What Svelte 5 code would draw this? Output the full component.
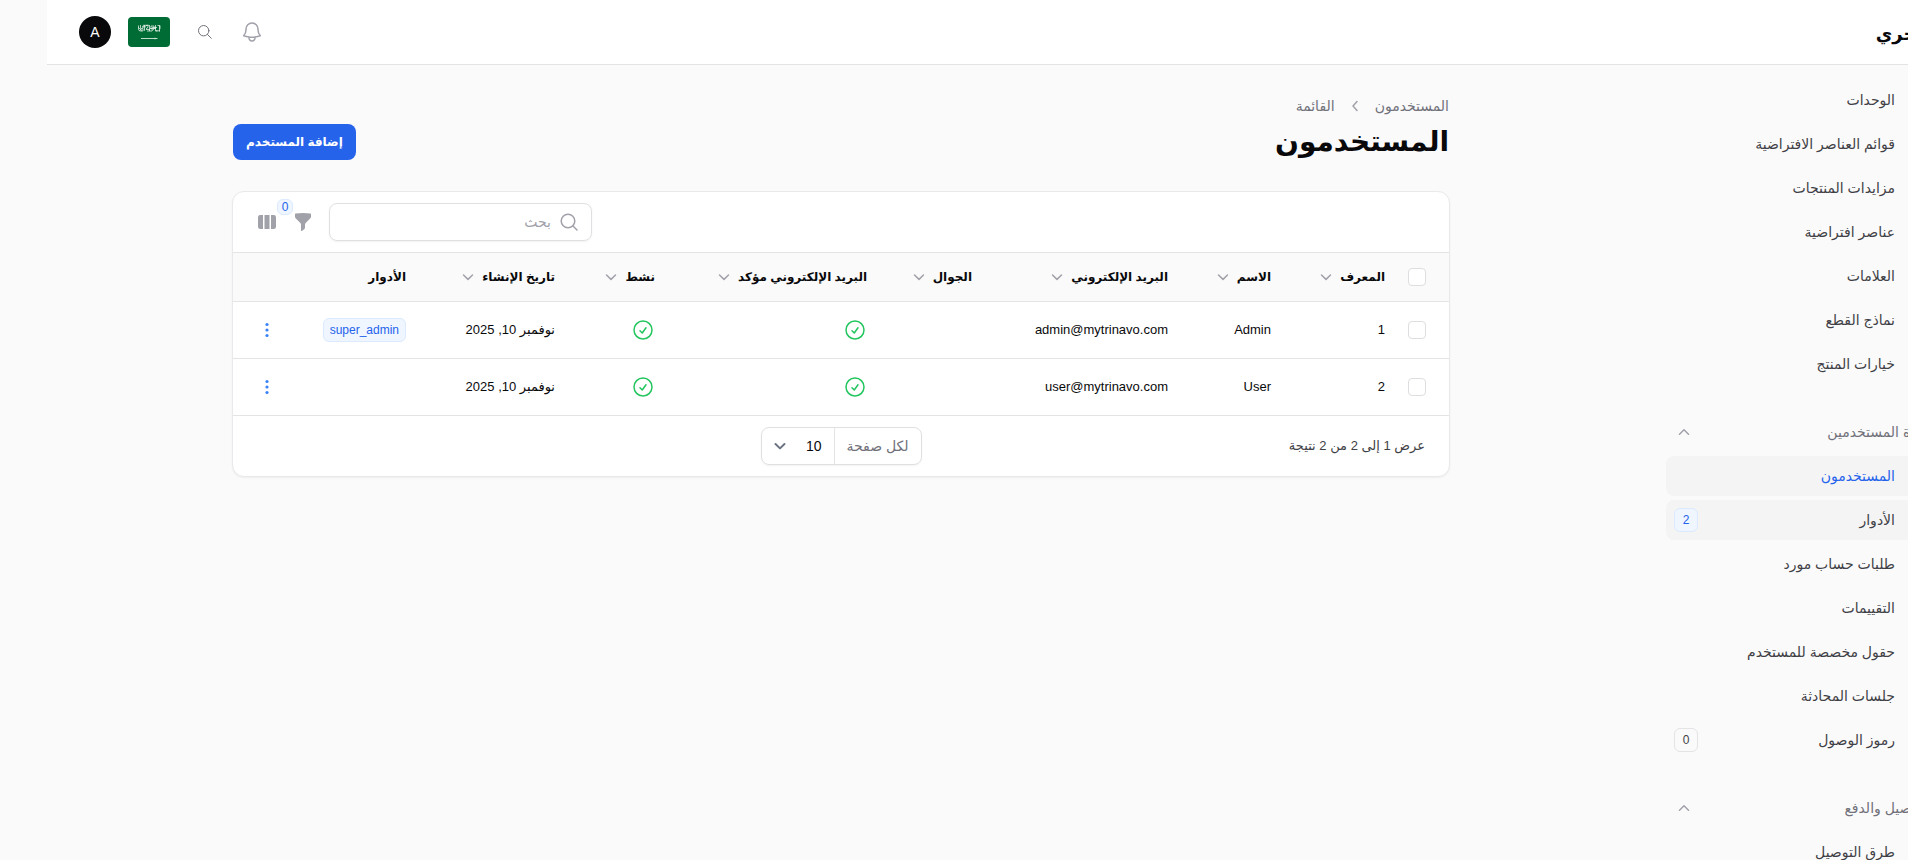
<script>
	let search = $state('');
	let perPage = $state('10');

	const navGroups = [
		{
			title: '',
			links: [
				{ text: 'الوحدات', href: '#units' },
				{ text: 'قوائم العناصر الافتراضية', href: '#default-lists' },
				{ text: 'مزايدات المنتجات', href: '#bids' },
				{ text: 'عناصر افتراضية', href: '#virtual-items' },
				{ text: 'العلامات', href: '#tags' },
				{ text: 'نماذج القطع', href: '#models' },
				{ text: 'خيارات المنتج', href: '#options' }
			]
		},
		{
			title: 'إدارة المستخدمين',
			links: [
				{ text: 'المستخدمون', href: '#users', active: true },
				{ text: 'الأدوار', href: '#roles', badge: 2, highlighted: true },
				{ text: 'طلبات حساب مورد', href: '#vendor-requests' },
				{ text: 'التقييمات', href: '#reviews' },
				{ text: 'حقول مخصصة للمستخدم', href: '#custom-fields' },
				{ text: 'جلسات المحادثة', href: '#chats' },
				{ text: 'رموز الوصول', href: '#tokens', badge: 0 }
			]
		},
		{
			title: 'التوصيل والدفع',
			links: [{ text: 'طرق التوصيل', href: '#delivery' }]
		}
	];

	const columns = [
		{ key: 'id', label: 'المعرف', sortable: true },
		{ key: 'name', label: 'الاسم', sortable: true },
		{ key: 'email', label: 'البريد الإلكتروني', sortable: true },
		{ key: 'mobile', label: 'الجوال', sortable: true },
		{ key: 'verified', label: 'البريد الإلكتروني مؤكد', sortable: true },
		{ key: 'enabled', label: 'نشط', sortable: true },
		{ key: 'created', label: 'تاريخ الإنشاء', sortable: true },
		{ key: 'roles', label: 'الأدوار', sortable: false }
	];

	const users = [
		{ id: 1, name: 'Admin', email: 'admin@mytrinavo.com', created: 'نوفمبر 10, 2025', role: 'super_admin' },
		{ id: 2, name: 'User', email: 'user@mytrinavo.com', created: 'نوفمبر 10, 2025', role: '' }
	];
</script>

{#snippet chevron(direction)}
	<svg class="chevron" viewBox="0 0 20 20" aria-hidden="true">
		<path d={direction === 'up' ? 'M5.5 12.2 10 7.8l4.5 4.4' : 'M5.5 8 10 12.4 14.5 8'} />
	</svg>
{/snippet}

{#snippet check()}
	<svg class="check" viewBox="0 0 24 24" aria-label="نعم">
		<path d="M9 12.75 11.25 15 15 9.75M21 12a9 9 0 1 1-18 0 9 9 0 0 1 18 0Z" />
	</svg>
{/snippet}

<div class="viewport">
	<div class="page" dir="rtl" lang="ar">
		<header class="topbar">
			<a class="logo" href="#home">متجري</a>
			<div class="topbar-end">
				<button class="icon-button bell" aria-label="الإشعارات">
					<svg viewBox="0 0 24 24">
						<path
							d="M14.857 17.082a23.848 23.848 0 0 0 5.454-1.31A8.967 8.967 0 0 1 18 9.75V9A6 6 0 0 0 6 9v.75a8.967 8.967 0 0 1-2.312 6.022c1.733.64 3.56 1.085 5.455 1.31m5.714 0a24.255 24.255 0 0 1-5.714 0m5.714 0a3 3 0 1 1-5.714 0"
						/>
					</svg>
				</button>
				<button class="icon-button find" aria-label="بحث">
					<svg viewBox="0 0 16 16">
						<circle cx="6.7" cy="6.7" r="5.2" />
						<path d="m10.5 10.5 3.8 3.8" />
					</svg>
				</button>
				<button class="flag" aria-label="العربية">
					<svg viewBox="0 0 42 30">
						<g fill="none" stroke="#fff" stroke-width="0.8" opacity="0.85">
							<path
								d="M10.5 8.500v3.500q0 2 2 2h2.500M12.500 8v3.500h2.500V8.800M16.500 8v5.500M18 8.500q2-1 2 1t-2 2.200M21.500 8v6M23 9h3v3h-3zM27.500 8v5q0 1.500 2 1M29.500 8.500h2.500v3.500M31.500 9v5.500M12 13h5M19 14h5l1.500-2M27 13.800h5M14 9.800h4M22 11.500h6M10.500 10.500l3 3M18 12.500h4M24 10.500h5M15 8.300h6"
							/>
						</g>
						<path d="M13 21.500h16.500M27 20.800v1.500" fill="none" stroke="#d5e8dc" stroke-width="0.9" />
					</svg>
				</button>
				<button class="avatar">A</button>
			</div>
		</header>

		<div class="layout">
			<aside class="sidebar">
				{#each navGroups as group}
					<nav class="nav-group">
						{#if group.title}
							<button class="group-title">
								<span>{group.title}</span>
								{@render chevron('up')}
							</button>
						{/if}
						{#each group.links as link}
							<a
								href={link.href}
								class="nav-link"
								class:active={link.active}
								class:highlighted={link.highlighted}
							>
								<span>{link.text}</span>
								{#if link.badge !== undefined}
									<span class="nav-badge">{link.badge}</span>
								{/if}
							</a>
						{/each}
					</nav>
				{/each}
			</aside>

			<main class="content">
				<nav class="breadcrumbs">
					<a href="#users">المستخدمون</a>
					<svg viewBox="0 0 20 20" aria-hidden="true"><path d="M12 5.500 8 10l4 4.500" /></svg>
					<span>القائمة</span>
				</nav>
				<div class="heading">
					<h1>المستخدمون</h1>
					<button class="primary">إضافة المستخدم</button>
				</div>

				<section class="card">
					<div class="toolbar">
						<label class="search">
							<svg viewBox="0 0 20 20" aria-hidden="true">
								<circle cx="9" cy="9" r="6.800" />
								<path d="m14 14 4 4" />
							</svg>
							<input type="search" placeholder="بحث" aria-label="بحث" bind:value={search} />
						</label>
						<button class="tool" aria-label="تصفية">
							<svg viewBox="0 0 20 20">
								<path
									d="M2.628 1.601C5.028 1.206 7.490 1 10 1s4.973.206 7.372.601a.75.75 0 0 1 .628.740v2.288a2.250 2.250 0 0 1-.659 1.590l-4.682 4.683a2.250 2.250 0 0 0-.659 1.590v3.037c0 .684-.310 1.330-.844 1.757l-1.937 1.550A.75.75 0 0 1 8 18.250v-5.757a2.250 2.250 0 0 0-.659-1.591L2.659 6.220A2.250 2.250 0 0 1 2 4.629V2.340a.75.75 0 0 1 .628-.740Z"
								/>
							</svg>
							<span class="tool-badge">0</span>
						</button>
						<button class="tool" aria-label="الأعمدة">
							<svg viewBox="0 0 20 20">
								<path
									d="M14 17h2.750A2.250 2.250 0 0 0 19 14.750v-9.500A2.250 2.250 0 0 0 16.750 3H14v14ZM12.500 3h-5v14h5V3ZM3.250 3H6v14H3.250A2.250 2.250 0 0 1 1 14.750v-9.500A2.250 2.250 0 0 1 3.250 3Z"
								/>
							</svg>
						</button>
					</div>

					<table>
						<colgroup>
							<col class="col-select" />
							{#each columns as column}
								<col class="col-{column.key}" />
							{/each}
							<col class="col-actions" />
						</colgroup>
						<thead>
							<tr>
								<th class="select"><input type="checkbox" aria-label="تحديد الكل" /></th>
								{#each columns as column}
									<th>
										{#if column.sortable}
											<button class="sort">
												<span>{column.label}</span>
												{@render chevron('down')}
											</button>
										{:else}
											{column.label}
										{/if}
									</th>
								{/each}
								<th></th>
							</tr>
						</thead>
						<tbody>
							{#each users as user}
								<tr>
									<td class="select"><input type="checkbox" aria-label={user.name} /></td>
									<td>{user.id}</td>
									<td>{user.name}</td>
									<td>{user.email}</td>
									<td></td>
									<td>{@render check()}</td>
									<td>{@render check()}</td>
									<td>{user.created}</td>
									<td>
										{#if user.role}
											<span class="role">{user.role}</span>
										{/if}
									</td>
									<td class="actions">
										<button class="more" aria-label="إجراءات">
											<svg viewBox="0 0 20 20">
												<circle cx="10" cy="4.500" r="1.600" />
												<circle cx="10" cy="10" r="1.600" />
												<circle cx="10" cy="15.500" r="1.600" />
											</svg>
										</button>
									</td>
								</tr>
							{/each}
						</tbody>
					</table>

					<footer class="pagination">
						<span class="summary">عرض 1 إلى 2 من 2 نتيجة</span>
						<div class="per-page">
							<label for="per-page">لكل صفحة</label>
							<div class="select-wrap">
								<select id="per-page" bind:value={perPage}>
									<option>5</option>
									<option>10</option>
									<option>25</option>
									<option>50</option>
								</select>
								{@render chevron('down')}
							</div>
						</div>
					</footer>
				</section>
			</main>
		</div>
	</div>
</div>

<style>
	:global(body) {
		background-color: #fafafa;
	}

	* {
		box-sizing: border-box;
	}

	button,
	input,
	select {
		font: inherit;
		color: inherit;
	}

	button {
		padding: 0;
		border: 0;
		background: none;
		cursor: pointer;
	}

	a {
		color: inherit;
		text-decoration: none;
	}

	svg {
		display: block;
		flex-shrink: 0;
	}

	.viewport {
		height: 100vh;
		overflow: hidden;
	}

	.page {
		width: 100%;
		margin-left: 47px;
		font-family: 'Liberation Sans', 'DejaVu Sans', sans-serif;
		font-size: 14px;
		line-height: 20px;
		color: #09090b;
	}

	/* Top bar */
	.topbar {
		display: flex;
		align-items: center;
		justify-content: space-between;
		height: 65px;
		padding: 0 20px 0 32px;
		background-color: #fff;
		border-bottom: 1px solid #e4e4e7;
	}

	.logo {
		padding-top: 4px;
		font-size: 18px;
		font-weight: bold;
		line-height: 28px;
	}

	.topbar-end {
		display: flex;
		align-items: center;
		gap: 17px;
	}

	.icon-button {
		display: grid;
		place-items: center;
		height: 32px;
	}

	.icon-button svg {
		fill: none;
		stroke: #a1a1aa;
		stroke-width: 1.5;
		stroke-linecap: round;
		stroke-linejoin: round;
	}

	.bell svg {
		width: 24px;
		height: 24px;
	}

	.find {
		width: 36px;
	}

	.find svg {
		width: 16px;
		height: 16px;
		stroke: #71717a;
		stroke-width: 1;
	}

	.flag {
		width: 42px;
		height: 30px;
		border-radius: 4px;
		background-color: #006c35;
	}

	.avatar {
		width: 32px;
		height: 32px;
		border-radius: 50%;
		background-color: #09090b;
		color: #fff;
	}

	.layout {
		display: flex;
	}

	/* Sidebar */
	.sidebar {
		display: flex;
		flex-direction: column;
		gap: 28px;
		width: 320px;
		flex-shrink: 0;
		padding: 15px 24px 0 31px;
		color: #3f3f46;
	}

	.nav-group {
		display: flex;
		flex-direction: column;
		gap: 4px;
	}

	.group-title {
		display: flex;
		align-items: center;
		justify-content: space-between;
		height: 40px;
		padding-left: 8px;
		color: #71717a;
	}

	.nav-link {
		display: flex;
		align-items: center;
		justify-content: space-between;
		height: 40px;
		padding: 0 36px 0 8px;
		border-radius: 8px;
	}

	.nav-link:hover,
	.nav-link.highlighted,
	.nav-link.active {
		background-color: #f4f4f5;
	}

	.nav-link.active {
		color: #2563eb;
	}

	.nav-badge {
		width: 24px;
		height: 24px;
		border: 1px solid #e4e4e7;
		border-radius: 6px;
		font-size: 12px;
		line-height: 22px;
		text-align: center;
	}

	.highlighted .nav-badge,
	.tool-badge,
	.role {
		border: 1px solid #dbeafe;
		background-color: #eff6ff;
		color: #2563eb;
	}

	.chevron {
		width: 20px;
		height: 20px;
		fill: none;
		stroke: #a1a1aa;
		stroke-width: 1.5;
		stroke-linecap: round;
		stroke-linejoin: round;
	}

	/* Content */
	.content {
		flex: 1;
		min-width: 0;
		max-width: 1280px;
		margin: 0 auto;
		padding: 31px 32px;
	}

	.breadcrumbs {
		display: flex;
		align-items: center;
		gap: 8px;
		margin-bottom: 8px;
		color: #71717a;
	}

	.breadcrumbs svg {
		width: 20px;
		height: 20px;
		margin: 0 2px;
		fill: none;
		stroke: #a1a1aa;
		stroke-width: 1.5;
		stroke-linecap: round;
		stroke-linejoin: round;
	}

	.heading {
		display: flex;
		align-items: center;
		justify-content: space-between;
		margin-bottom: 31px;
	}

	h1 {
		margin: 0;
		font-size: 28px;
		line-height: 36px;
		font-weight: bold;
	}

	.primary {
		height: 36px;
		padding: 0 13px;
		border-radius: 8px;
		background-color: #2563eb;
		color: #fff;
		font-size: 12px;
		font-weight: bold;
	}

	.card {
		margin: 0 -1px;
		border: 1px solid #e9e9eb;
		border-radius: 12px;
		background-color: #fff;
		box-shadow: 0 1px 2px rgba(0, 0, 0, 0.05);
	}

	.toolbar {
		display: flex;
		align-items: center;
		justify-content: flex-end;
		gap: 16px;
		height: 60px;
		padding: 0 24px;
	}

	.search {
		display: flex;
		align-items: center;
		gap: 8px;
		width: 263px;
		height: 38px;
		padding: 0 12px;
		border: 1px solid #e0e0e2;
		border-radius: 8px;
		box-shadow: 0 1px 2px rgba(0, 0, 0, 0.05);
	}

	.search svg {
		width: 20px;
		height: 20px;
		fill: none;
		stroke: #a1a1aa;
		stroke-width: 1.5;
		stroke-linecap: round;
	}

	.search input {
		flex: 1;
		min-width: 0;
		padding: 0;
		border: 0;
		outline: none;
		background: none;
	}

	.search input::placeholder {
		color: #a1a1aa;
	}

	.tool {
		position: relative;
	}

	.tool svg {
		width: 20px;
		height: 20px;
		fill: #a1a1aa;
	}

	.tool-badge {
		position: absolute;
		top: -13px;
		right: 20px;
		width: 16px;
		height: 16px;
		border-radius: 6px;
		font-size: 12px;
		line-height: 14px;
	}

	/* Table */
	table {
		width: 100%;
		table-layout: fixed;
		border-spacing: 0;
	}

	.col-select {
		width: 52px;
	}
	.col-id {
		width: 114px;
	}
	.col-name {
		width: 103px;
	}
	.col-email {
		width: 196px;
	}
	.col-mobile {
		width: 105px;
	}
	.col-verified {
		width: 212px;
	}
	.col-enabled {
		width: 100px;
	}
	.col-created {
		width: 149px;
	}
	.col-roles {
		width: 106px;
	}
	.col-actions {
		width: 79px;
	}

	th,
	td {
		padding: 0 12px;
		border-top: 1px solid #e4e4e7;
		text-align: right;
		white-space: nowrap;
	}

	th {
		height: 49px;
		background-color: #fafafa;
		font-size: 12px;
		font-weight: bold;
	}

	td {
		height: 57px;
		font-size: 13px;
	}

	.select {
		padding: 0 23px 0 0;
	}

	input[type='checkbox'] {
		display: block;
		appearance: none;
		width: 18px;
		height: 18px;
		margin: 0;
		border: 1px solid #dedee0;
		border-radius: 4px;
		background-color: #fff;
	}

	input[type='checkbox']:checked {
		background-color: #2563eb;
	}

	.sort {
		display: flex;
		align-items: center;
		gap: 4px;
	}

	.check {
		width: 24px;
		height: 24px;
		fill: none;
		stroke: #22c55e;
		stroke-width: 1.5;
		stroke-linecap: round;
		stroke-linejoin: round;
	}

	.role {
		display: inline-block;
		height: 24px;
		padding: 0 6px;
		border-radius: 6px;
		font-size: 12px;
		line-height: 22px;
	}

	.actions {
		padding: 0 12px 0 24px;
	}

	.more {
		display: block;
		margin-right: auto;
	}

	.more svg {
		width: 20px;
		height: 20px;
		fill: #3b82f6;
	}

	/* Pagination */
	.pagination {
		display: grid;
		grid-template-columns: 1fr auto 1fr;
		align-items: center;
		height: 61px;
		padding: 0 24px;
		border-top: 1px solid #e4e4e7;
	}

	.summary {
		font-size: 13px;
		color: #3f3f46;
	}

	.per-page {
		display: flex;
		height: 38px;
		border: 1px solid #e0e0e2;
		border-radius: 8px;
		box-shadow: 0 1px 2px rgba(0, 0, 0, 0.05);
	}

	.per-page label {
		padding: 0 12px;
		border-left: 1px solid #e4e4e7;
		line-height: 36px;
		color: #71717a;
	}

	.select-wrap {
		display: grid;
		align-items: center;
		width: 72px;
	}

	.select-wrap select,
	.select-wrap .chevron {
		grid-area: 1 / 1;
	}

	.select-wrap select {
		height: 36px;
		padding: 0 12px;
		border: 0;
		outline: none;
		appearance: none;
		background: none;
	}

	.select-wrap .chevron {
		justify-self: end;
		margin-left: 8px;
		stroke: #6b7280;
		stroke-width: 2;
		pointer-events: none;
	}
</style>
